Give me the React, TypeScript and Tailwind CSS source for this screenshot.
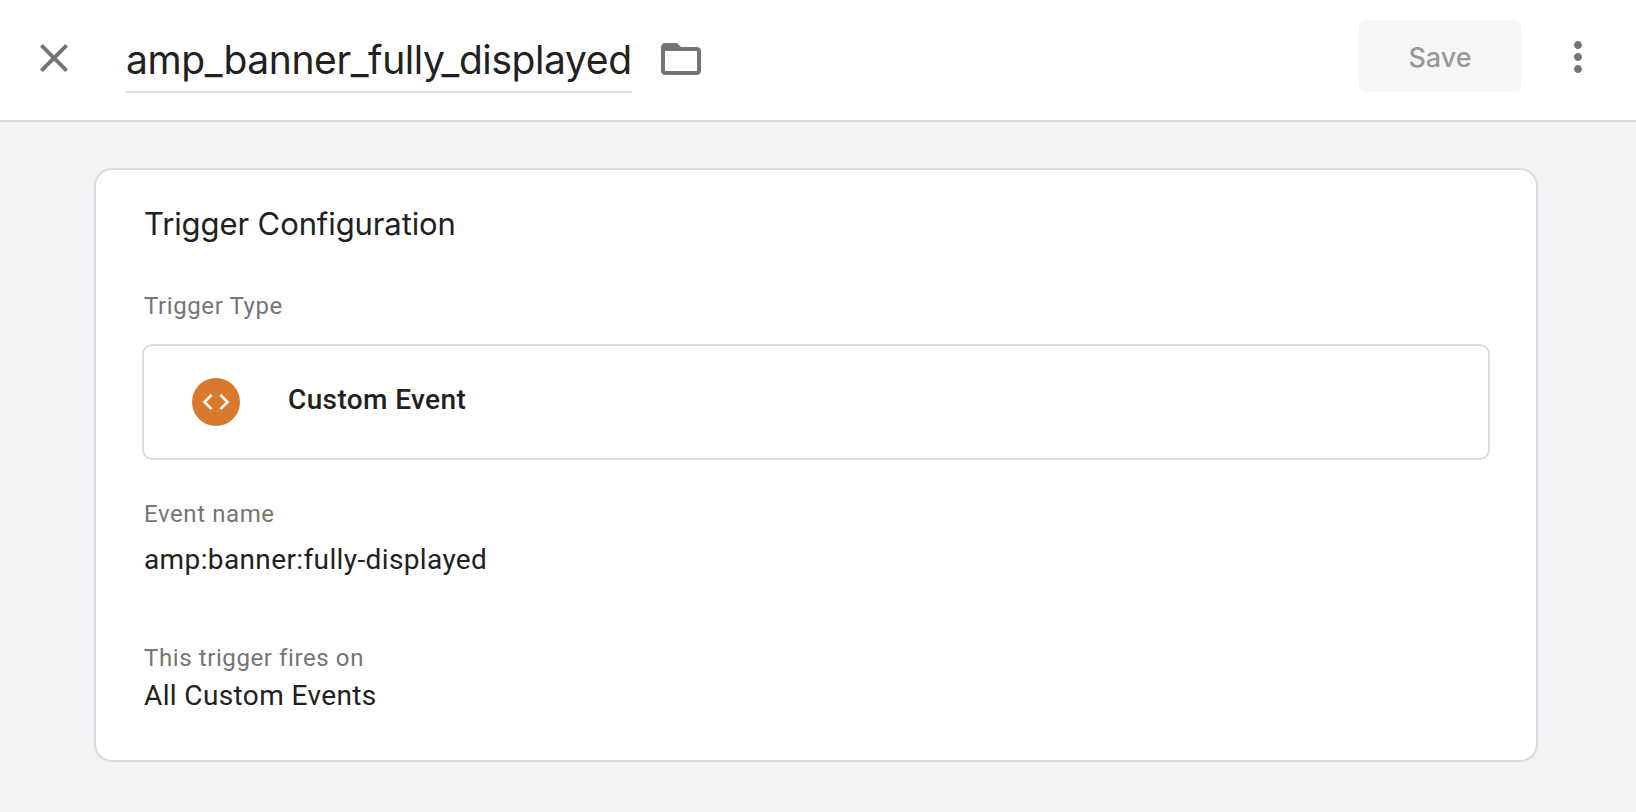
import type { ReactNode } from "react";

function Icon({ d, size = 48 }: { d: string; size?: number }) {
  return (
    <svg width={size} height={size} viewBox="0 0 24 24" fill="currentColor" aria-hidden="true" className="block shrink-0">
      <path d={d} />
    </svg>
  );
}

const CLOSE =
  "M19 6.41L17.59 5 12 10.59 6.41 5 5 6.41 10.59 12 5 17.59 6.41 19 12 13.41 17.59 19 19 17.59 13.41 12z";
const FOLDER =
  "M20 6h-8l-2-2H4c-1.1 0-1.99.9-1.99 2L2 18c0 1.1.9 2 2 2h16c1.1 0 2-.9 2-2V8c0-1.1-.9-2-2-2zm0 12H4V8h16v10z";
const MORE =
  "M12 8c1.1 0 2-.9 2-2s-.9-2-2-2-2 .9-2 2 .9 2 2 2zm0 2c-1.1 0-2 .9-2 2s.9 2 2 2 2-.9 2-2-.9-2-2-2zm0 6c-1.1 0-2 .9-2 2s.9 2 2 2 2-.9 2-2-.9-2-2-2z";
const CODE =
  "M9.4 16.6L4.8 12l4.6-4.6L8 6l-6 6 6 6 1.4-1.4zm5.2 0l4.6-4.6-4.6-4.6L16 6l6 6-6 6-1.4-1.4z";

function Label({ children }: { children: ReactNode }) {
  return <div className="text-[24px] leading-6 tracking-[0.6px] text-[#757575]">{children}</div>;
}

function Value({ children }: { children: ReactNode }) {
  return <div className="text-[28px] leading-8 tracking-[0.38px]">{children}</div>;
}

export default function App() {
  return (
    <div className="flex h-[812px] w-full flex-col bg-[#f1f3f4] font-['Roboto',sans-serif] text-[#212121]">
      <header className="flex h-[122px] shrink-0 items-start border-b-2 border-[#dadce0] bg-white pr-[34px] pl-[30px]">
        <button className="mt-[34px] text-[#757575]" aria-label="Close">
          <Icon d={CLOSE} />
        </button>
        <div className="mt-9 ml-12 w-[506px] border-b-2 border-[#dadce0] pb-[7px] font-['Inter',sans-serif] text-[39px] leading-[48px] tracking-[-0.4px] whitespace-nowrap">
          amp_banner_fully_displayed
        </div>
        <button className="mt-[35px] ml-[24.5px] text-[#757575]" aria-label="Folder">
          <Icon d={FOLDER} />
        </button>
        <button className="mt-5 ml-auto h-[72px] w-[164px] rounded-lg bg-[#f6f6f6] pt-1 font-['Inter',sans-serif] text-[27px] font-medium text-[#999999]">
          Save
        </button>
        <button className="mt-[33px] ml-8 text-[#757575]" aria-label="More">
          <Icon d={MORE} />
        </button>
      </header>

      <main className="mt-[46px] mr-[98px] ml-[94px] h-[594px] rounded-[18px] border-2 border-[#dadce0] bg-white pt-[38px] pr-[46px] pl-[46px]">
        <h1 className="ml-0.5 font-['Inter',sans-serif] text-[31px] leading-8 tracking-[-0.1px]">Trigger Configuration</h1>
        <div className="mt-[54px] ml-0.5">
          <Label>Trigger Type</Label>
        </div>
        <div className="mt-[26px] flex h-[116px] items-center rounded-[10px] border-2 border-[#dadce0] pl-12">
          <span className="flex size-12 items-center justify-center rounded-full bg-[#d9792e] text-white">
            <Icon d={CODE} size={32} />
          </span>
          <span className="ml-12 pb-[5px] text-[28px] leading-8 font-medium tracking-[0.38px]">Custom Event</span>
        </div>
        <section className="mt-[42px] ml-0.5 flex flex-col gap-[18px]">
          <Label>Event name</Label>
          <Value>amp:banner:fully-displayed</Value>
        </section>
        <section className="mt-[70px] ml-0.5 flex flex-col gap-[10px]">
          <Label>This trigger fires on</Label>
          <Value>All Custom Events</Value>
        </section>
      </main>
    </div>
  );
}
